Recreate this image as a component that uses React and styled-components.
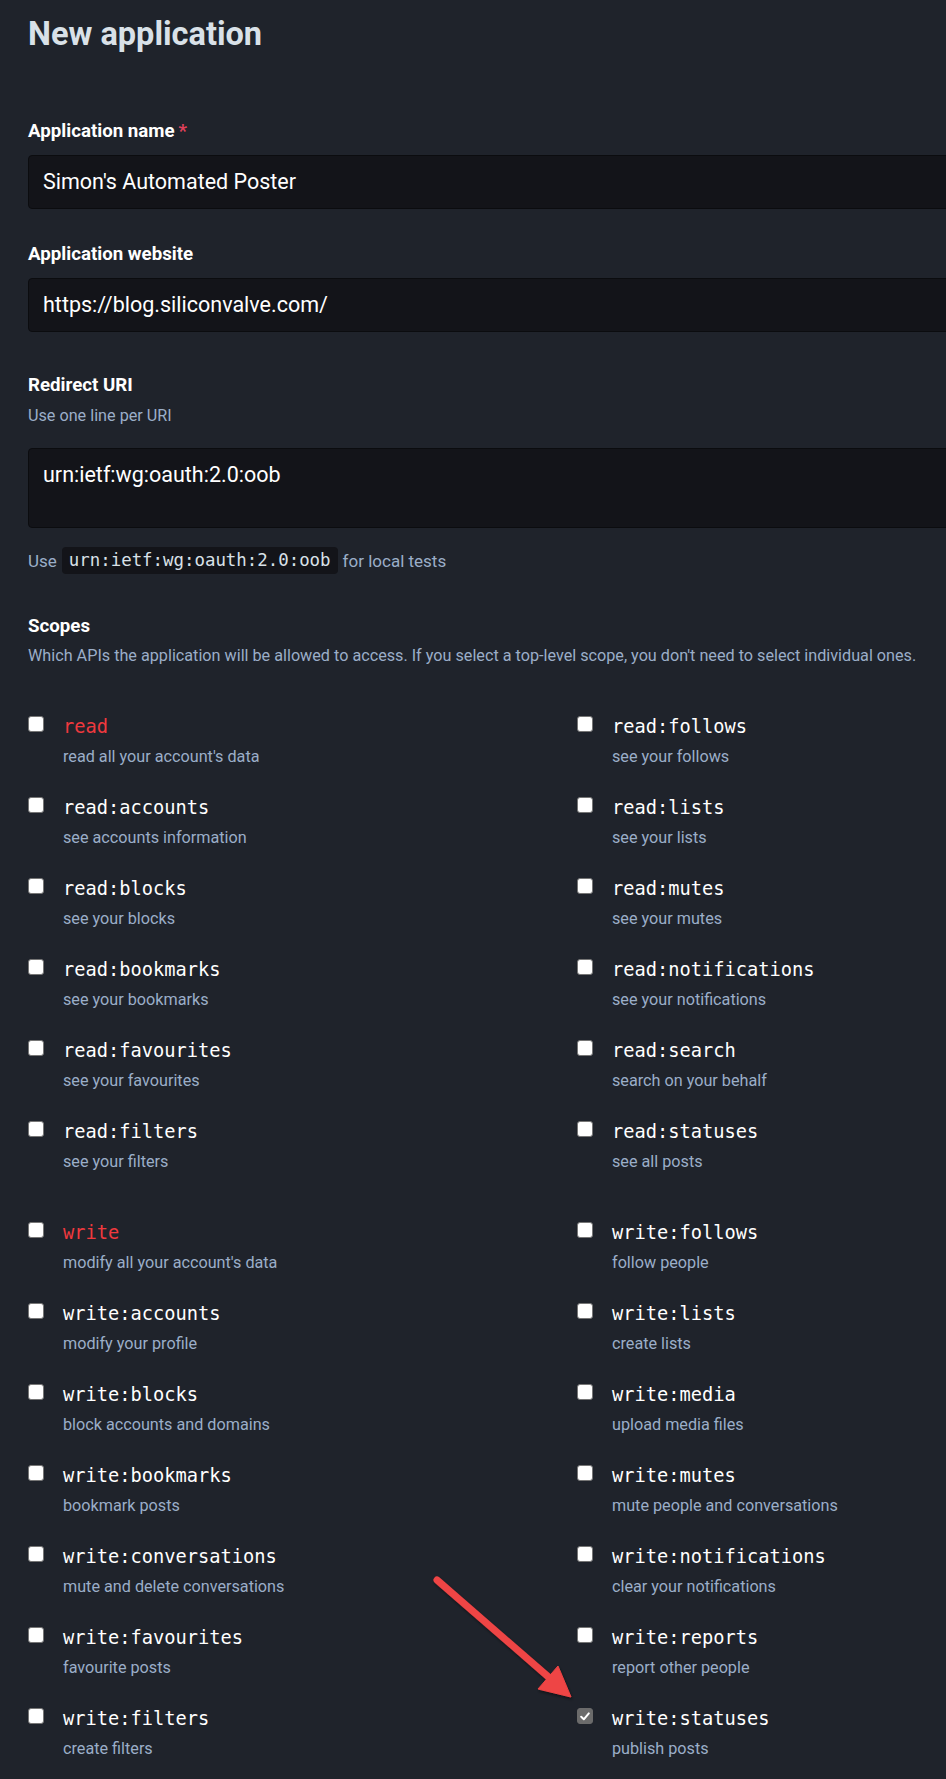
import React from "react";
import styled, { createGlobalStyle } from "styled-components";

const Global = createGlobalStyle`
  html, body { margin: 0; padding: 0; overflow-x: hidden; background: #1f232b; }
  body { font-family: Roboto, "Liberation Sans", sans-serif; color: #fff; }
`;

const Page = styled.div`
  position: relative;
  width: 1100px;
  padding: 15px 0 0 28px;
  box-sizing: border-box;
  min-height: 1779px;
`;

const Title = styled.h1`
  margin: 0;
  font-size: 32.5px;
  line-height: 38px;
  font-weight: 700;
  color: #d9e1e8;
`;

const Group = styled.div`
  margin-top: ${(p) => p.$mt}px;
`;

const Label = styled.div`
  font-size: 18.7px;
  line-height: 22px;
  font-weight: 700;
  color: #fff;
`;

const Required = styled.span`
  color: #df405a;
  margin-left: 4px;
`;

const Hint = styled.div`
  font-size: 16.2px;
  line-height: 20px;
  color: #9baec8;
  margin-top: ${(p) => p.$mt || 0}px;
`;

const Input = styled.div`
  margin-top: ${(p) => p.$mt}px;
  box-sizing: border-box;
  width: 1072px;
  height: ${(p) => p.$h}px;
  background: #131419;
  border: 1px solid #0b0c0f;
  border-radius: 4px;
  padding: 14px 14px;
  font-size: 21.5px;
  line-height: 24px;
  color: #fff;
`;

const CodeHint = styled.div`
  margin-top: 19px;
  height: 27px;
  display: flex;
  align-items: center;
  font-size: 17px;
  color: #9baec8;
  gap: 5px;
`;

const Code = styled.code`
  font-family: "DejaVu Sans Mono", "Liberation Mono", monospace;
  font-size: 17.4px;
  line-height: 27px;
  height: 27px;
  padding: 0 7px;
  background: #131419;
  border-radius: 4px;
  color: #d9e1e8;
`;

const ScopeGrid = styled.div`
  display: grid;
  grid-template-columns: 549px 549px;
  row-gap: 29px;
  margin-top: ${(p) => p.$mt}px;
`;

const Item = styled.div`
  display: flex;
  align-items: flex-start;
  gap: 19px;
  height: 52px;
`;

const Box = styled.span`
  flex: none;
  margin-top: 1px;
  width: 16px;
  height: 16px;
  box-sizing: border-box;
  border-radius: 3px;
  border: 1px solid ${(p) => (p.$checked ? "#6b6b6b" : "#767676")};
  background: ${(p) => (p.$checked ? "#6b6b6b" : "#fff")};
  display: flex;
  align-items: center;
  justify-content: center;
`;

const ItemText = styled.div`
  display: flex;
  flex-direction: column;
`;

const ScopeName = styled.div`
  font-family: "DejaVu Sans Mono", "Liberation Mono", monospace;
  font-size: 18.7px;
  line-height: 24px;
  color: ${(p) => (p.$top ? "#f0393e" : "#fff")};
`;

const Arrow = styled.svg`
  position: absolute;
  left: 420px;
  top: 1565px;
  overflow: visible;
`;

const readScopes = [
  ["read", "read all your account's data", true],
  ["read:follows", "see your follows"],
  ["read:accounts", "see accounts information"],
  ["read:lists", "see your lists"],
  ["read:blocks", "see your blocks"],
  ["read:mutes", "see your mutes"],
  ["read:bookmarks", "see your bookmarks"],
  ["read:notifications", "see your notifications"],
  ["read:favourites", "see your favourites"],
  ["read:search", "search on your behalf"],
  ["read:filters", "see your filters"],
  ["read:statuses", "see all posts"],
];

const writeScopes = [
  ["write", "modify all your account's data", true],
  ["write:follows", "follow people"],
  ["write:accounts", "modify your profile"],
  ["write:lists", "create lists"],
  ["write:blocks", "block accounts and domains"],
  ["write:media", "upload media files"],
  ["write:bookmarks", "bookmark posts"],
  ["write:mutes", "mute people and conversations"],
  ["write:conversations", "mute and delete conversations"],
  ["write:notifications", "clear your notifications"],
  ["write:favourites", "favourite posts"],
  ["write:reports", "report other people"],
  ["write:filters", "create filters"],
  ["write:statuses", "publish posts", false, true],
];

function Scope({ name, hint, top, checked }) {
  return (
    <Item>
      <Box $checked={checked}>
        {checked && (
          <svg width="10" height="9" viewBox="0 0 10 9">
            <path d="M1.2 4.8 L3.8 7.3 L8.8 1.4" fill="none" stroke="#fff" strokeWidth="2" strokeLinecap="round" strokeLinejoin="round" />
          </svg>
        )}
      </Box>
      <ItemText>
        <ScopeName $top={top}>{name}</ScopeName>
        <Hint $mt={8}>{hint}</Hint>
      </ItemText>
    </Item>
  );
}

export default function App() {
  return (
    <>
      <Global />
      <Page>
        <Title>New application</Title>

        <Group $mt={67}>
          <Label>
            Application name<Required>*</Required>
          </Label>
          <Input $mt={13} $h={54}>Simon's Automated Poster</Input>
        </Group>

        <Group $mt={34}>
          <Label>Application website</Label>
          <Input $mt={13} $h={54}>https://blog.siliconvalve.com/</Input>
        </Group>

        <Group $mt={42}>
          <Label>Redirect URI</Label>
          <Hint $mt={10}>Use one line per URI</Hint>
          <Input $mt={22} $h={80}>urn:ietf:wg:oauth:2.0:oob</Input>
          <CodeHint>
            <span>Use</span>
            <Code>urn:ietf:wg:oauth:2.0:oob</Code>
            <span>for local tests</span>
          </CodeHint>
        </Group>

        <Group $mt={41}>
          <Label>Scopes</Label>
          <Hint $mt={9}>
            Which APIs the application will be allowed to access. If you select a top-level scope, you don't need to select individual ones.
          </Hint>
          <ScopeGrid $mt={49}>
            {readScopes.map(([n, h, t]) => (
              <Scope key={n} name={n} hint={h} top={t} />
            ))}
          </ScopeGrid>
          <ScopeGrid $mt={49}>
            {writeScopes.map(([n, h, t, c]) => (
              <Scope key={n} name={n} hint={h} top={t} checked={c} />
            ))}
          </ScopeGrid>
        </Group>

        <Arrow width="170" height="145" viewBox="0 0 170 145">
          <defs>
            <filter id="sh" x="-20%" y="-20%" width="140%" height="140%">
              <feDropShadow dx="1" dy="2" stdDeviation="1.5" floodColor="#000" floodOpacity="0.45" />
            </filter>
          </defs>
          <g filter="url(#sh)" fill="#ee4444" stroke="#ee4444">
            <line x1="17" y1="15" x2="132" y2="115" strokeWidth="7" strokeLinecap="round" />
            <polygon points="151,132 118,124 138,101" strokeWidth="1" strokeLinejoin="round" />
          </g>
        </Arrow>
      </Page>
    </>
  );
}
